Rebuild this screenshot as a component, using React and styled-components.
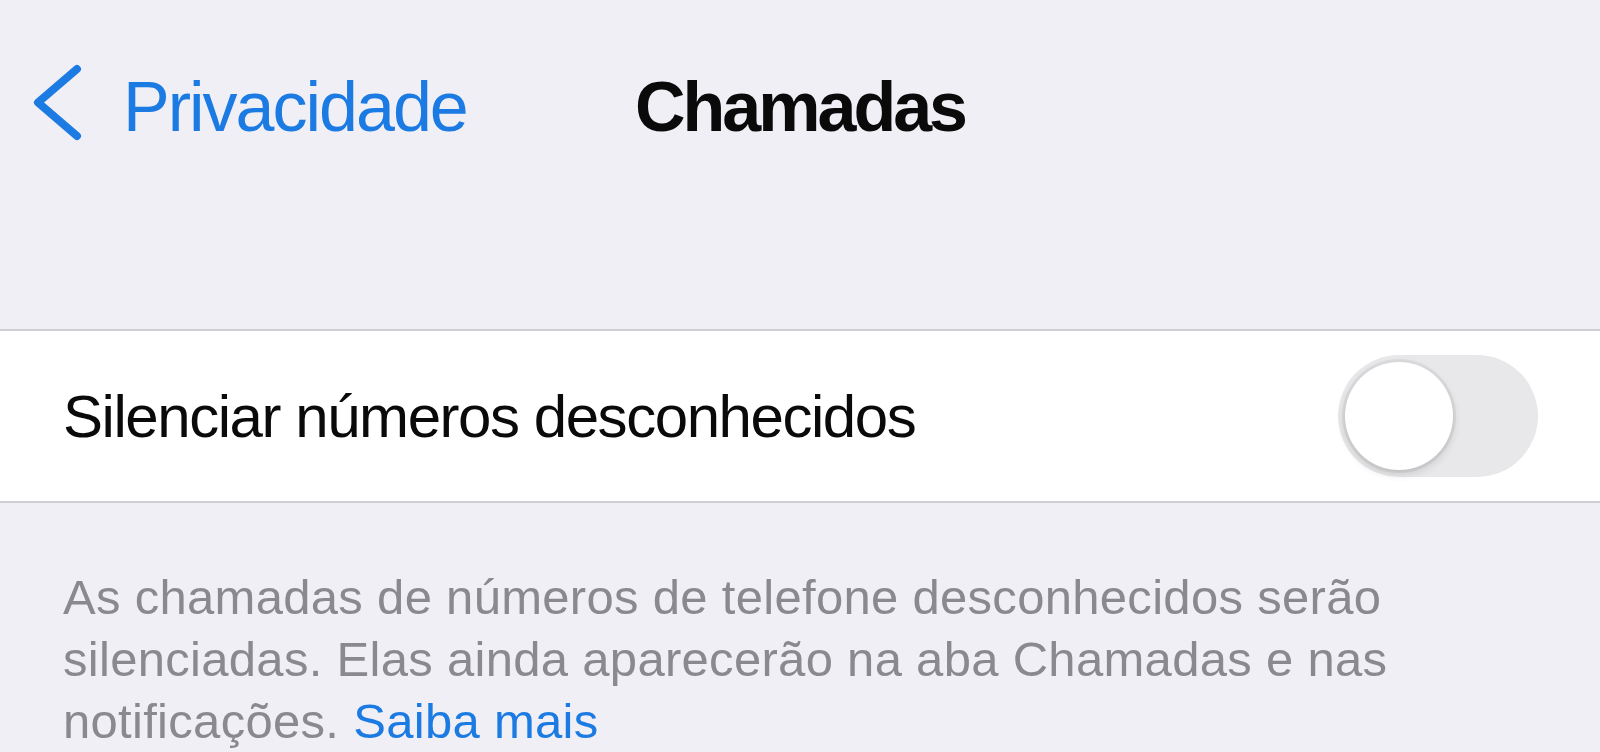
import React from 'react';
import styled, { createGlobalStyle } from 'styled-components';

//Styles
const GlobalStyle = createGlobalStyle`
  html, body {
    margin: 0;
    padding: 0;
    background-color: #f0eff5;
    font-family: "Liberation Sans", Arial, sans-serif;
    -webkit-font-smoothing: antialiased;
  }
`;

const Page = styled.div`
  width: 1600px;
  height: 752px;
  overflow: hidden;
  background-color: #f0eff5;
`;

const NavBar = styled.header`
  height: 214px;
  display: grid;
  grid-template-columns: 1fr auto 1fr;
  align-items: center;
`;

const BackButton = styled.a`
  display: flex;
  align-items: center;
  gap: 38px;
  padding-left: 33px;
  color: #1b7be3;
  font-size: 70px;
  letter-spacing: -2px;
  text-decoration: none;
`;

const ChevronIcon = styled.svg`
  margin-bottom: 10px;
`;

const Title = styled.h1`
  margin: 0;
  font-size: 70px;
  font-weight: 700;
  letter-spacing: -3px;
  color: #0a0a0a;
`;

const Group = styled.section`
  margin-top: 115px;
  background-color: #ffffff;
  border-top: 2px solid #cfcfd3;
  border-bottom: 2px solid #cfcfd3;
  height: 170px;
  padding: 0 62px 0 63px;
  display: flex;
  align-items: center;
  justify-content: space-between;
`;

const Label = styled.span`
  font-size: 60px;
  letter-spacing: -1.45px;
  color: #0a0a0a;
`;

const Switch = styled.div`
  width: 200px;
  height: 122px;
  border-radius: 61px;
  background-color: ${({ $on }) => ($on ? '#34c759' : '#e8e8ea')};
  display: flex;
  align-items: center;
  justify-content: ${({ $on }) => ($on ? 'flex-end' : 'flex-start')};
  padding: 0 7px;
  box-sizing: border-box;
`;

const Knob = styled.div`
  width: 108px;
  height: 108px;
  border-radius: 50%;
  background-color: #ffffff;
  box-shadow: 0 0 0 3px rgba(0, 0, 0, 0.05), 0 4px 10px rgba(0, 0, 0, 0.14);
`;

const Footer = styled.p`
  margin: 63px 0 0;
  padding: 0 150px 0 63px;
  font-size: 49px;
  line-height: 62px;
  letter-spacing: 0.3px;
  color: #8a8a8e;
`;

const Link = styled.a`
  color: #1b7be3;
  text-decoration: none;
`;

//Component
function Chevron() {
  return (
    <ChevronIcon width="52" height="77" viewBox="0 0 52 77" fill="none">
      <polyline
        points="44,5 5,38.5 44,72"
        stroke="#1b7be3"
        strokeWidth="8"
        strokeLinecap="round"
        strokeLinejoin="round"
      />
    </ChevronIcon>
  );
}

export default function App() {
  return (
    <Page>
      <GlobalStyle />
      <NavBar>
        <BackButton href="#">
          <Chevron />
          Privacidade
        </BackButton>
        <Title>Chamadas</Title>
        <div />
      </NavBar>

      <Group>
        <Label>Silenciar números desconhecidos</Label>
        <Switch $on={false}>
          <Knob />
        </Switch>
      </Group>

      <Footer>
        As chamadas de números de telefone desconhecidos serão silenciadas. Elas
        ainda aparecerão na aba Chamadas e nas notificações.{' '}
        <Link href="#">Saiba mais</Link>
      </Footer>
    </Page>
  );
}
